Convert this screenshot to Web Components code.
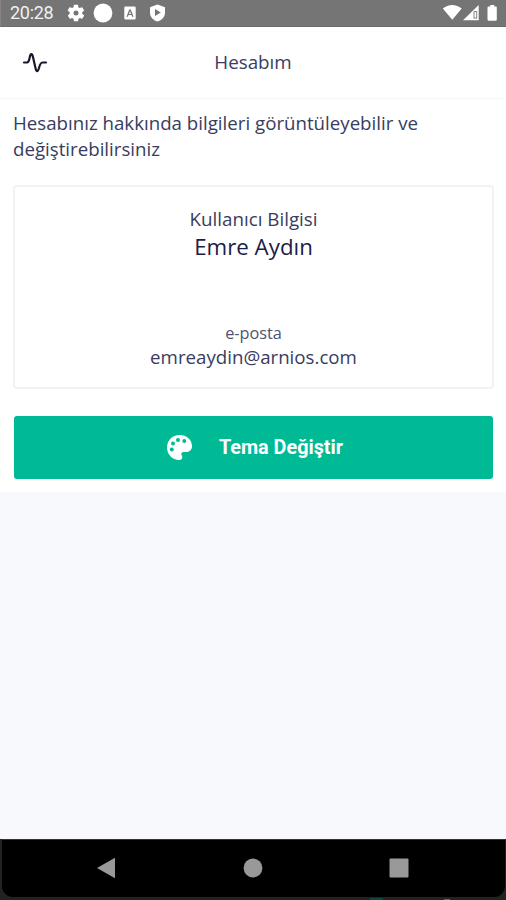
<!DOCTYPE html>
<html lang="tr">

<head>
  <meta charset="UTF-8">
  <meta name="viewport" content="width=device-width, initial-scale=1.0">
  <title>Hesabım</title>
  <style>
    body {
      margin: 0;
      height: 900px;
      overflow: hidden;
      background: #f7f9fd;
      font-family: "Open Sans", "Noto Sans", sans-serif;
      color: #383c60;
    }
  </style>
</head>

<body>
  <phone-screen>
    <status-bar slot="top" time="20:28"></status-bar>
    <app-header slot="top">Hesabım</app-header>
    <account-panel>
      <span slot="intro">Hesabınız hakkında bilgileri görüntüleyebilir ve değiştirebilirsiniz</span>
      <info-card>
        <info-field class="name" label="Kullanıcı Bilgisi">Emre Aydın</info-field>
        <info-field class="mail" label="e-posta">emreaydin@arnios.com</info-field>
      </info-card>
      <theme-button>Tema Değiştir</theme-button>
    </account-panel>
    <nav-bar slot="bottom"></nav-bar>
  </phone-screen>

  <script>
    const define = (name, html) => {
      customElements.define(name, class extends HTMLElement {
        constructor() {
          super()
          this.attachShadow({ mode: 'open' }).innerHTML = html
        }

        connectedCallback() {
          // copy attributes into elements marked with data-attr
          this.shadowRoot.querySelectorAll('[data-attr]').forEach((el) => {
            el.textContent = this.getAttribute(el.dataset.attr)
          })
        }
      })
    }

    define('phone-screen', `
      <style>
        :host { display: flex; flex-direction: column; height: 900px; }
        main { flex: 1; }
      </style>
      <slot name="top"></slot>
      <main><slot></slot></main>
      <slot name="bottom"></slot>
    `)

    define('status-bar', `
      <style>
        :host {
          display: flex;
          align-items: center;
          box-sizing: border-box;
          height: 27px;
          padding: 0 6px 1px 9px;
          border-left: 1px solid #858585;
          background: #757575;
          border-bottom: 1px solid #6b6b6b;
          color: #f0f0f0;
          font: 18px/26px Roboto, sans-serif;
        }
        .time { width: 56px; letter-spacing: -0.3px; }
        svg { display: block; fill: #fff; }
        .spacer { flex: 1; }
      </style>
      <span class="time" data-attr="time"></span>
      <svg width="20" height="20" viewBox="0 0 24 24"><path d="M19.4 13c0-.3.1-.6.1-1s0-.7-.1-1l2.1-1.6c.2-.2.2-.4.1-.6l-2-3.5c-.1-.2-.4-.3-.6-.2l-2.500 1c-.5-.4-1.100-.7-1.700-1l-.4-2.600c0-.3-.2-.5-.5-.5h-4c-.2 0-.5.2-.5.4L9 5c-.6.3-1.200.6-1.700 1l-2.500-1c-.2-.1-.5 0-.6.2l-2 3.500c-.1.200-.1.500.1.600L4.500 11c0 .3-.1.600-.1 1s0 .700.1 1l-2.100 1.700c-.2.1-.2.400-.1.600l2 3.400c.1.200.4.300.6.200l2.500-1c.5.400 1.100.800 1.700 1l.4 2.700c0 .2.3.400.5.400h4c.3 0 .5-.2.5-.4l.4-2.700c.6-.2 1.200-.6 1.700-1l2.500 1c.2.1.5 0 .6-.2l2-3.400c.1-.2.1-.5-.1-.6zM12 15a3 3 0 110-6 3 3 0 010 6z"/></svg>
      <svg width="34" height="20" viewBox="0 0 34 20"><circle cx="17" cy="10" r="9.400"/></svg>
      <svg width="20" height="20" viewBox="0 0 20 20"><path fill-rule="evenodd" d="M5.500 3.500h9q1.200 0 1.200 1.200v10.600q0 1.200-1.200 1.200h-9q-1.200 0-1.200-1.200V4.700Q4.300 3.500 5.500 3.500zM9.200 6.500l-2.700 7.200h1.400l.6-1.700h3l.6 1.700h1.400l-2.700-7.200zM10 8.100l1 2.800H9z"/></svg>
      <svg width="34" height="20" viewBox="0 0 34 20"><path fill-rule="evenodd" d="M17.500 1.500l7.500 2.800v5.400c0 4.200-3.200 7.600-7.500 8.900-4.300-1.300-7.500-4.700-7.500-8.900V4.300zM15 6v7l5.800-3.500z"/></svg>
      <span class="spacer"></span>
      <svg width="58" height="20" viewBox="0 0 58 20"><path d="M.8 5.500C6.500.8 14 .8 19.700 5.500l-9.400 11.300zM21 17.200L36.700 2v15.200zM46.500 3.600h1.800V2h4v1.600h1.500q1 0 1 1V16.500q0 1.300-1.300 1.300h-6.700q-1.300 0-1.300-1.300V4.600q0-1 1-1z"/><path d="M32 8.500v7M34.700 8v7.500M32 8.500h2.700M32 15h2.700" stroke="#858585" stroke-width="1" fill="none"/></svg>
    `)

    define('app-header', `
      <style>
        :host {
          display: grid;
          grid-template-columns: 72px 1fr 72px;
          align-items: center;
          box-sizing: border-box;
          height: 72px;
          padding-bottom: 2px;
          border-bottom: 1px solid #f7f7f8;
          background: #fff;
          font-size: 18.8px;
          text-align: center;
        }
        svg { display: block; margin-left: 22px; }
      </style>
      <svg width="26" height="24" viewBox="0 0 26 24" fill="none" stroke="#17192a" stroke-width="2.200" stroke-linecap="round" stroke-linejoin="round"><path d="M2 12.500h3c1.500 0 2-1.200 2.700-5 .8-4.400 2.500-4.400 3.400 0l2.500 11c.8 3.500 2.200 3.500 3.200 0 1-4 1.800-6 3.700-6H24"/></svg>
      <span><slot></slot></span>
    `)

    define('account-panel', `
      <style>
        :host {
          display: flex;
          flex-direction: column;
          box-sizing: border-box;
          height: 393px;
          padding: 11px 12px 12px 13px;
          background: #fff;
        }
        p {
          margin: 0 0 23px;
          font-size: 18.7px;
          line-height: 26px;
        }
      </style>
      <p><slot name="intro"></slot></p>
      <slot></slot>
    `)

    define('info-card', `
      <style>
        :host {
          display: flex;
          flex-direction: column;
          justify-content: space-between;
          box-sizing: border-box;
          height: 204px;
          padding: 19px 0 18px;
          border: 2px solid #f0f3f5;
          border-radius: 4px;
          text-align: center;
        }
      </style>
      <slot></slot>
    `)

    define('info-field', `
      <style>
        :host { display: flex; flex-direction: column; }
        .label { font-size: 18.8px; line-height: 26px; }
        .value { font-size: 22.3px; line-height: 30px; color: #1c2048; }
        :host(.mail) .label { font-size: 16.3px; line-height: 22px; color: #50536f; }
        :host(.mail) .value { font-size: 18.7px; line-height: 25px; color: #383c60; }
      </style>
      <span class="label" data-attr="label"></span>
      <span class="value"><slot></slot></span>
    `)

    define('theme-button', `
      <style>
        :host { display: block; margin: 27px 1px 0; }
        button {
          display: flex;
          align-items: center;
          justify-content: center;
          gap: 26px;
          width: 100%;
          height: 63px;
          padding: 0 0 0 2px;
          border: 0;
          border-radius: 3px;
          background: #00b995;
          color: #fff;
          font: bold 19.8px Roboto, sans-serif;
        }
        svg { display: block; }
      </style>
      <button>
        <svg width="27" height="27" viewBox="0 0 27 27" fill="#fff"><path d="M13.500 1C6.500 1 1 6.400 1 13.500S6.600 26 13 26c2.200 0 3.300-1.300 3.300-2.700 0-1.500-1-2-1-3.200 0-1.200 1-2 2.300-2h3c3.200 0 5.400-2.600 5.400-5.800C26 5.800 20.500 1 13.500 1z"/><g fill="#00b995"><circle cx="5.800" cy="15.500" r="2"/><circle cx="7" cy="9.600" r="2"/><circle cx="12" cy="6" r="2"/><circle cx="18.300" cy="7" r="2"/></g></svg>
        <span><slot></slot></span>
      </button>
    `)

    define('nav-bar', `
      <style>
        :host {
          display: block;
          box-sizing: border-box;
          height: 61px;
          padding: 0 1px 3px 2px;
          background:
            linear-gradient(#0c4a38, #0c4a38) 370px 100% / 13px 2px no-repeat,
            linear-gradient(#666, #666) 444px 100% / 6px 1px no-repeat,
            #222;
        }
        nav {
          display: grid;
          grid-template-columns: repeat(3, 146px);
          justify-content: center;
          justify-items: center;
          align-items: center;
          box-sizing: border-box;
          height: 58px;
          padding: 0 2px 1px 0;
          border-top: 1px solid #333;
          border-radius: 0 0 11px 11px;
          background: #000;
        }
        svg { display: block; fill: #999; }
      </style>
      <nav>
        <svg width="22" height="22" viewBox="0 0 22 22"><path d="M1 11L19 .7v20.600z"/></svg>
        <svg width="20" height="20" viewBox="0 0 20 20"><circle cx="10" cy="10" r="9.400"/></svg>
        <svg width="20" height="20" viewBox="0 0 20 20"><rect x=".5" y=".5" width="19" height="19" rx="1"/></svg>
      </nav>
    `)
  </script>
</body>

</html>
